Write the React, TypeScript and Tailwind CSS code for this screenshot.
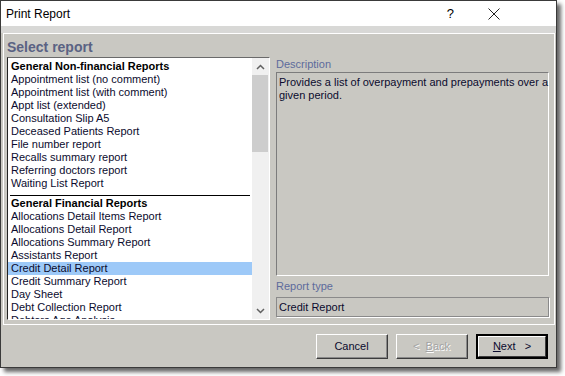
import React from 'react';

const nonFinancial = [
  'Appointment list (no comment)',
  'Appointment list (with comment)',
  'Appt list (extended)',
  'Consultation Slip A5',
  'Deceased Patients Report',
  'File number report',
  'Recalls summary report',
  'Referring doctors report',
  'Waiting List Report',
];

const financial = [
  'Allocations Detail Items Report',
  'Allocations Detail Report',
  'Allocations Summary Report',
  'Assistants Report',
  'Credit Detail Report',
  'Credit Summary Report',
  'Day Sheet',
  'Debt Collection Report',
  'Debtors Age Analysis',
];

const selected = 'Credit Detail Report';

function Row({ label, bold }: { label: string; bold?: boolean }) {
  const active = label === selected;
  return (
    <div
      className={`h-[13px] whitespace-nowrap pl-[3px] leading-[13px] ${
        bold ? 'font-bold text-black' : 'text-[#0b0b2e]'
      } ${active ? 'bg-[#9dc9f8]' : ''}`}
    >
      {label}
    </div>
  );
}

function Chevron({ down }: { down?: boolean }) {
  return (
    <svg width="9" height="6" viewBox="0 0 9 6" className="text-[#606060]">
      <path
        d={down ? 'M1 1l3.5 3.5L8 1' : 'M1 5l3.5-3.5L8 5'}
        fill="none"
        stroke="currentColor"
        strokeWidth={1.5}
      />
    </svg>
  );
}

function Button({
  children,
  primary,
  disabled,
}: {
  children: React.ReactNode;
  primary?: boolean;
  disabled?: boolean;
}) {
  return (
    <button
      type="button"
      className={`flex h-[25px] w-[72px] items-center justify-center bg-[#c9c8c2] text-[11px] ${
        primary ? 'border-2 border-black' : 'border border-t-white border-l-white border-r-[#3c3c3c] border-b-[#3c3c3c]'
      } ${disabled ? 'text-[#a3a3a3] [text-shadow:1px_1px_0_#fff]' : 'text-[#0b0b2e]'}`}
    >
      <span
        className={`flex h-full w-full items-center justify-center ${
          primary
            ? 'border border-t-white border-l-white border-r-[#3c3c3c] border-b-[#3c3c3c]'
            : 'border-r border-b border-r-[#8a8a8a] border-b-[#8a8a8a]'
        }`}
      >
        {children}
      </span>
    </button>
  );
}

export default function App() {
  return (
    <div className="h-[376px] w-[565px] bg-white font-['Liberation_Sans',Arial,sans-serif]">
      <div className="flex h-[368px] w-[557px] flex-col border border-[#3a3a3a] bg-[#c9c8c2] shadow-[4px_4px_4px_rgba(0,0,0,0.6)]">
        {/* title bar */}
        <div className="flex h-[25px] items-center bg-white pl-[5px] text-[12px] text-black">
          <span>Print Report</span>
          <span className="ml-auto mr-[34px] text-[13px]">?</span>
          <svg width="12" height="12" viewBox="0 0 12 12" className="mr-[56px]">
            <path d="M0.5 0.5l11 11M11.5 0.5l-11 11" stroke="#222" strokeWidth={1} />
          </svg>
        </div>
        <div className="h-[7px] bg-[#d8d8d6]" />

        {/* main panel */}
        <div className="ml-[2px] mr-[1px] flex h-[292px] flex-col border border-white px-[3px] pt-[5px]">
          <div className="mb-[2px] h-[16px] text-[14px] font-bold leading-[16px] text-[#5a6283]">Select report</div>
          <div className="flex gap-[6px] text-[11px]">
            {/* list */}
            <div className="flex h-[263px] w-[263px] border border-t-[#6a6a6a] border-l-[#222] border-b-white border-r-white bg-white">
              <div className="w-[244px] overflow-hidden pt-[2px]">
                <Row label="General Non-financial Reports" bold />
                {nonFinancial.map((l) => (
                  <Row key={l} label={l} />
                ))}
                <div className="mx-[2px] mb-[1px] mt-[5px] h-[1px] bg-black" />
                <Row label="General Financial Reports" bold />
                {financial.map((l) => (
                  <Row key={l} label={l} />
                ))}
              </div>
              <div className="flex w-[17px] flex-col bg-[#f0f0f0]">
                <div className="flex h-[17px] items-center justify-center">
                  <Chevron />
                </div>
                <div className="h-[77px] w-[16px] bg-[#cdcdcd]" />
                <div className="flex-1" />
                <div className="flex h-[17px] items-center justify-center">
                  <Chevron down />
                </div>
              </div>
            </div>

            {/* details */}
            <div className="flex w-[273px] flex-col">
              <div className="flex h-[15px] items-center text-[#5d6b9c]">Description</div>
              <div className="h-[204px] border border-t-[#7c7c7c] border-l-[#7c7c7c] border-b-white border-r-white px-[2px] pt-[3px] leading-[13px] text-[#0b0b2e]">
                <div className="whitespace-nowrap">Provides a list of overpayment and prepayments over a</div>
                <div className="whitespace-nowrap">given period.</div>
              </div>
              <div className="flex h-[21px] items-center text-[#5d6b9c]">Report type</div>
              <div className="flex h-[20px] items-center border border-[#8a8a8a] px-[2px] text-[#0b0b2e] shadow-[1px_1px_0_#fff]">
                Credit Report
              </div>
            </div>
          </div>
        </div>

        {/* footer */}
        <div className="flex justify-end gap-[8px] pr-[8px] pt-[9px]">
          <Button>Cancel</Button>
          <Button disabled>
            &lt;&nbsp;&nbsp;<span className="underline">B</span>ack
          </Button>
          <Button primary>
            <span className="underline">N</span>ext&nbsp;&nbsp;&nbsp;&gt;
          </Button>
        </div>
      </div>
    </div>
  );
}
